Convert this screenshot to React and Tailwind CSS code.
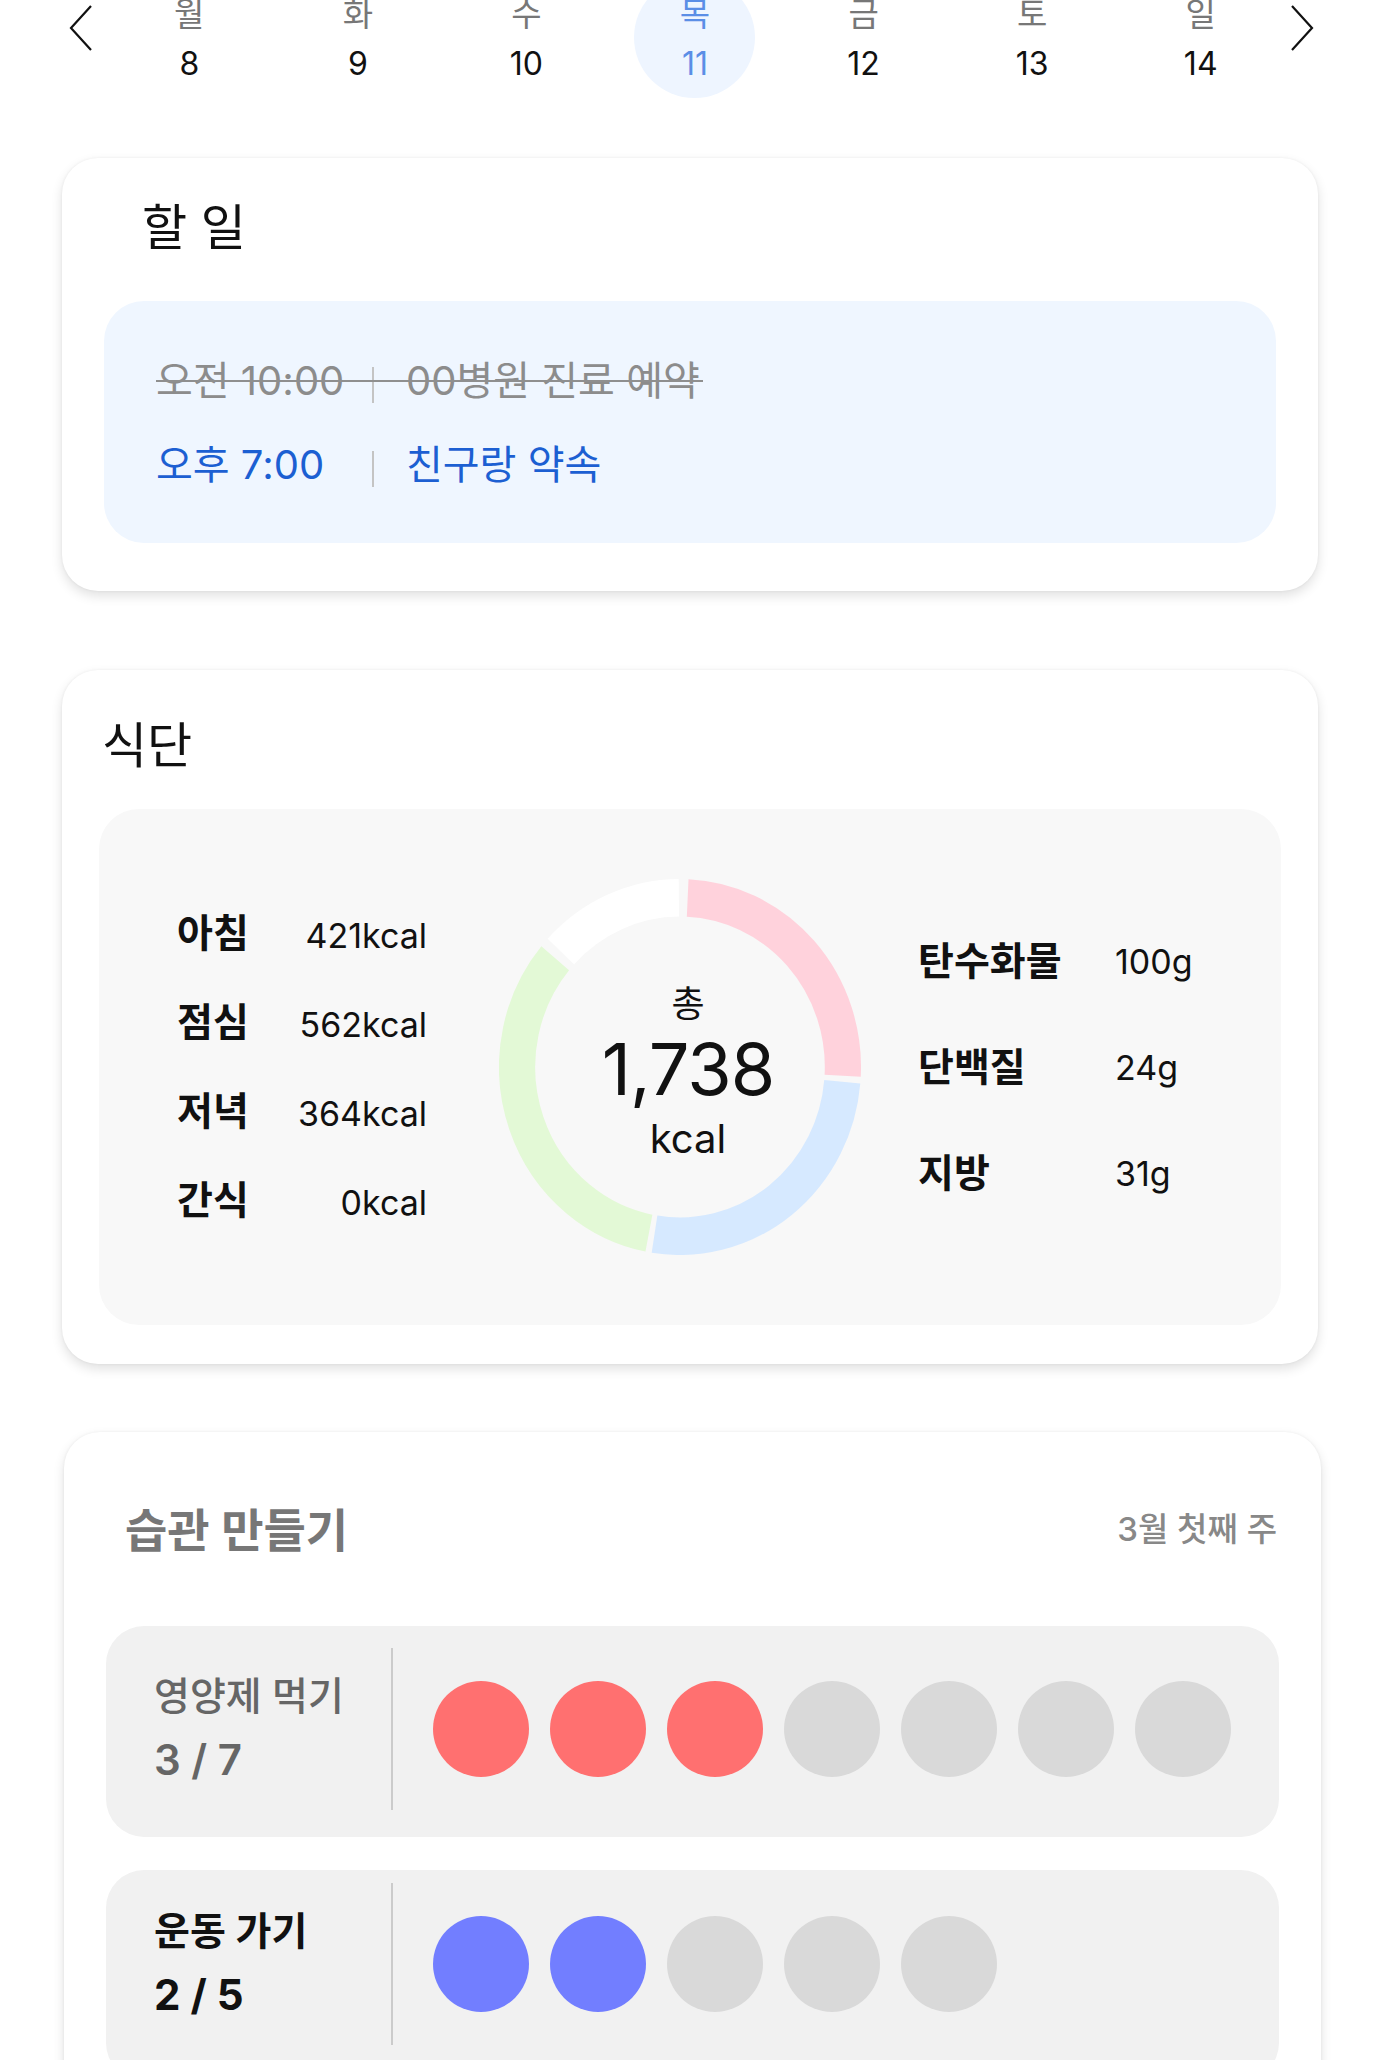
import React from 'react';

// week strip data
const days = [
  { name: '월', num: 8 },
  { name: '화', num: 9 },
  { name: '수', num: 10 },
  { name: '목', num: 11, active: true },
  { name: '금', num: 12 },
  { name: '토', num: 13 },
  { name: '일', num: 14 },
];

const meals = [
  ['아침', '421kcal'],
  ['점심', '562kcal'],
  ['저녁', '364kcal'],
  ['간식', '0kcal'],
];

const macros = [
  ['탄수화물', '100g'],
  ['단백질', '24g'],
  ['지방', '31g'],
];

// ring pieces, degrees clockwise from 12 o'clock
const segments = [
  { from: 2.7, to: 93, color: '#ffd2dc' },
  { from: 95, to: 189, color: '#d6e9ff' },
  { from: 191, to: 310, color: '#e3f9d6' },
  { from: 313, to: 359.6, color: '#ffffff' },
];

const habits = [
  { label: '영양제 먹기', done: 3, total: 7, color: 'bg-[#ff7070]', dim: true },
  { label: '운동 가기', done: 2, total: 5, color: 'bg-[#727eff]', dim: false },
];

function arcPath(a1, a2) {
  const pt = a => {
    const r = (a * Math.PI) / 180;
    return [50 + 45 * Math.sin(r), 50 - 45 * Math.cos(r)];
  };
  const [x1, y1] = pt(a1);
  const [x2, y2] = pt(a2);
  const large = a2 - a1 > 180 ? 1 : 0;
  return `M ${x1} ${y1} A 45 45 0 ${large} 1 ${x2} ${y2}`;
}

function Chevron({ right }) {
  return (
    <svg width="26" height="46" viewBox="0 0 26 46" fill="none">
      <polyline
        points={right ? '3,1 23,23 3,45' : '23,1 3,23 23,45'}
        stroke="#111"
        strokeWidth="2.2"
        strokeLinejoin="miter"
      />
    </svg>
  );
}

function Donut() {
  return (
    <div className="relative w-[362px] h-[376px] shrink-0">
      <svg
        className="absolute inset-0"
        width="362"
        height="376"
        viewBox="0 0 100 100"
        preserveAspectRatio="none"
      >
        {segments.map(s => (
          <path key={s.from} d={arcPath(s.from, s.to)} stroke={s.color} strokeWidth="10" fill="none" />
        ))}
      </svg>
      <div className="relative h-full flex flex-col items-center justify-center pl-[16px] pt-[14px] text-[#111]">
        <span className="text-[36px] leading-[44px]">총</span>
        <span className="text-[72px] leading-[85px] tracking-[-1px]">1,738</span>
        <span className="text-[40px] leading-[55px]">kcal</span>
      </div>
    </div>
  );
}

export default function App() {
  return (
    <div className="min-h-screen bg-white font-['Inter','Noto_Sans_CJK_KR',sans-serif] text-[#111] overflow-hidden">
      <div className="flex items-center mt-[-23px]">
        <div className="w-[105px] flex justify-end pr-[11px] mb-[20px]">
          <Chevron />
        </div>
        <div className="w-[1180px] grid grid-cols-7">
          {days.map(d => (
            <div key={d.num} className="flex justify-center">
              <div
                className={`w-[121px] h-[121px] rounded-full flex flex-col items-center justify-center gap-[6px] pt-[2px] ${
                  d.active ? 'bg-[#eef5ff] text-[#5b8ee6]' : ''
                }`}
              >
                <span className={`text-[33px] leading-[44px] ${d.active ? '' : 'text-[#777]'}`}>{d.name}</span>
                <span className={`text-[32px] leading-[44px] ${d.active ? '' : 'text-[#111]'}`}>{d.num}</span>
              </div>
            </div>
          ))}
        </div>
        <div className="flex-1 pl-[4px] mb-[20px]">
          <Chevron right />
        </div>
      </div>

      {/* 할 일 */}
      <div className="ml-[62px] w-[1256px] mt-[60px] bg-white rounded-[36px] shadow-[0_5px_12px_rgba(0,0,0,0.12),0_0_3px_rgba(0,0,0,0.06)] px-[42px] pt-[42px] pb-[48px]">
        <h2 className="ml-[38px] text-[49px] leading-[56px] font-normal">할 일</h2>
        <div className="mt-[45px] bg-[#eff6ff] rounded-[40px] pl-[52px] pt-[52px] pb-[50px] flex flex-col gap-[28px]">
          <div className="relative self-start flex items-center text-[40px] leading-[56px] text-[#8c8c8c]">
            <span className="w-[205px]">오전 10:00</span>
            <span className="ml-[11px] mt-[8px] w-[2px] h-[36px] bg-[#c4c4c4]" />
            <span className="ml-[32px]">00병원 진료 예약</span>
            <div className="absolute left-0 -right-[3px] top-[27px] h-[2px] bg-[#8f8f8f]" />
          </div>
          <div className="flex items-center text-[40px] leading-[56px] text-[#1c5fd2]">
            <span className="w-[205px]">오후 7:00</span>
            <span className="ml-[11px] mt-[8px] w-[2px] h-[36px] bg-[#c4c4c4]" />
            <span className="ml-[32px]">친구랑 약속</span>
          </div>
        </div>
      </div>

      {/* 식단 */}
      <div className="ml-[62px] w-[1256px] mt-[79px] bg-white rounded-[36px] shadow-[0_5px_12px_rgba(0,0,0,0.12),0_0_3px_rgba(0,0,0,0.06)] px-[37px] pt-[48px] pb-[39px]">
        <h2 className="ml-[3px] text-[49px] leading-[56px] font-normal">식단</h2>
        <div className="mt-[35px] h-[516px] bg-[#f8f8f8] rounded-[40px] pl-[78px] flex items-center">
          <div className="w-[250px] flex flex-col">
            {meals.map(([k, v]) => (
              <div key={k} className="h-[89px] flex items-center justify-between">
                <span className="text-[39px] font-bold">{k}</span>
                <span className="text-[34px] pt-[4px]">{v}</span>
              </div>
            ))}
          </div>
          <div className="ml-[72px]">
            <Donut />
          </div>
          <div className="ml-[57px] flex flex-col">
            {macros.map(([k, v]) => (
              <div key={k} className="h-[106px] flex items-center">
                <span className="w-[197px] text-[39px] font-bold">{k}</span>
                <span className="text-[34px]">{v}</span>
              </div>
            ))}
          </div>
        </div>
      </div>

      {/* 습관 만들기 */}
      <div className="ml-[64px] w-[1257px] mt-[68px] bg-white rounded-[36px] shadow-[0_5px_12px_rgba(0,0,0,0.12),0_0_3px_rgba(0,0,0,0.06)] px-[42px] pt-[72px] pb-[40px]">
        <div className="flex items-center justify-between">
          <h2 className="ml-[19px] text-[46px] leading-[52px] font-semibold text-[#777]">습관 만들기</h2>
          <span className="mr-[2px] text-[33px] font-medium text-[#888]">3월 첫째 주</span>
        </div>
        <div className="mt-[70px] flex flex-col gap-[33px]">
          {habits.map((h, i) => (
            <div
              key={h.label}
              className={`h-[211px] bg-[#f1f1f1] rounded-[38px] pl-[48px] flex items-start ${
                i === 0 ? 'pt-[22px]' : 'pt-[13px]'
              }`}
            >
              <div className="flex items-center">
                <div className={`w-[237px] flex flex-col ${h.dim ? 'text-[#666]' : 'text-[#111]'}`}>
                  <span className={`text-[39px] leading-[52px] ${h.dim ? 'font-medium' : 'font-semibold'}`}>{h.label}</span>
                  <span className={`mt-[10px] text-[42px] leading-[56px] ${h.dim ? 'font-semibold' : 'font-bold'}`}>
                    {h.done} / {h.total}
                  </span>
                </div>
                <div className="w-[2px] h-[162px] bg-[#cbcbcb]" />
                <div className="ml-[40px] flex gap-[21px]">
                  {Array.from({ length: h.total }).map((_, j) => (
                    <div
                      key={j}
                      className={`w-[96px] h-[96px] rounded-full ${j < h.done ? h.color : 'bg-[#d9d9d9]'}`}
                    />
                  ))}
                </div>
              </div>
            </div>
          ))}
        </div>
      </div>
    </div>
  );
}
